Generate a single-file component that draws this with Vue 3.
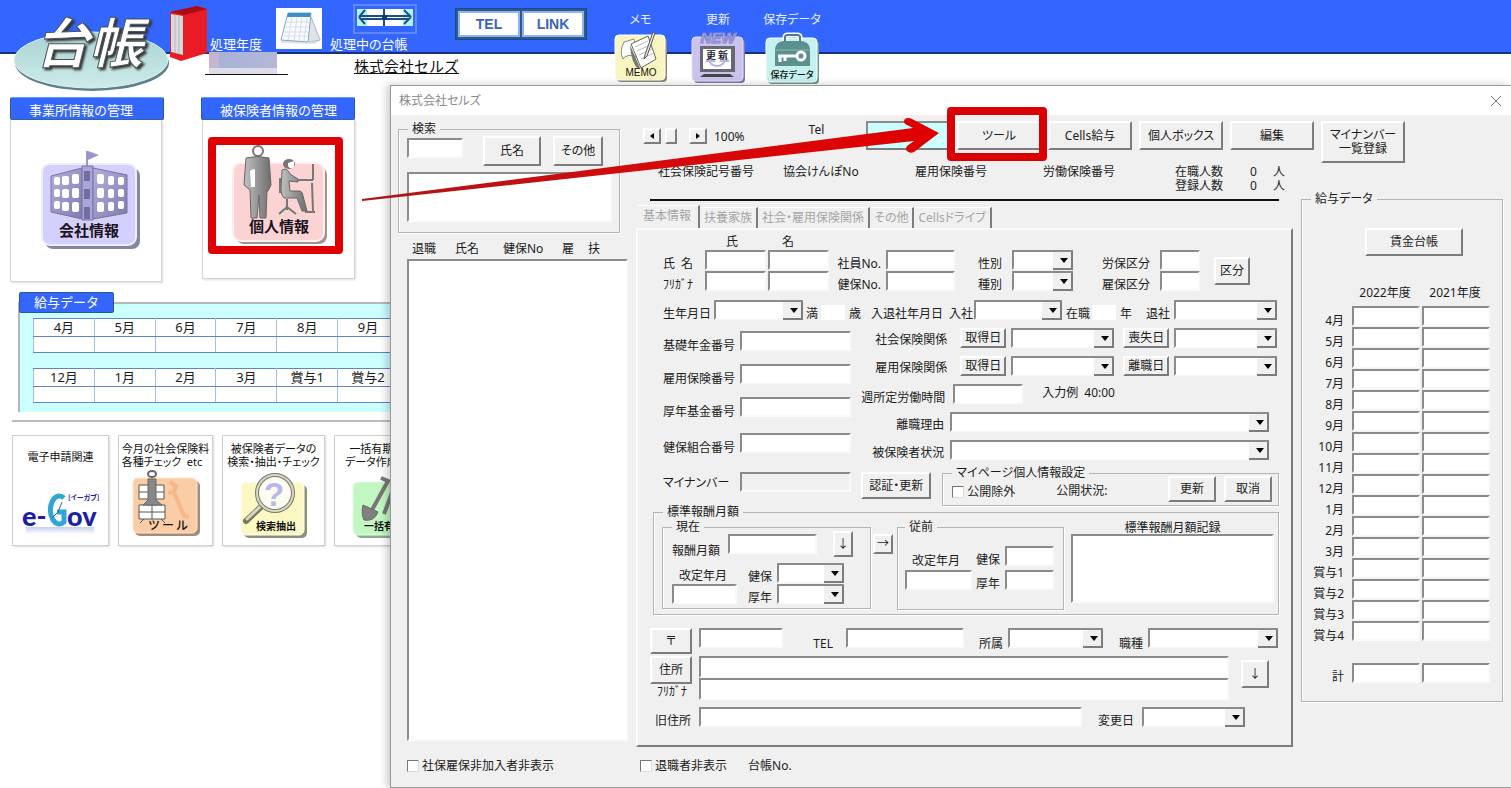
<script setup>
const monthRows = [
  ['4月', '5月', '6月', '7月', '8月', '9月'],
  ['12月', '1月', '2月', '3月', '賞与1', '賞与2'],
]
const payRows = [
  '4月', '5月', '6月', '7月', '8月', '9月', '10月', '11月', '12月',
  '1月', '2月', '3月', '賞与1', '賞与2', '賞与3', '賞与4',
]
const tabs = ['基本情報', '扶養家族', '社会・雇用保険関係', 'その他', 'Cellsドライブ']
const numberFields = [
  { id: 'kiso', label: '基礎年金番号' },
  { id: 'koyo', label: '雇用保険番号' },
  { id: 'kosei', label: '厚年基金番号' },
  { id: 'kenpo', label: '健保組合番号' },
  { id: 'mynum', label: 'マイナンバー', locked: true },
]
const insuranceRows = [
  { id: 'shaho', label: '社会保険関係', start: '取得日', end: '喪失日' },
  { id: 'koho', label: '雇用保険関係', start: '取得日', end: '離職日' },
]
const windowRows = [0, 1, 2]
</script>

<template>
  <div class="page">
    <header class="top">
      <svg class="logo" viewBox="0 -7 160 93" role="img" aria-label="台帳">
        <defs>
          <linearGradient id="oval" x1="0" y1="0" x2="0" y2="1">
            <stop offset="0" stop-color="#a9d3d3" />
            <stop offset="1" stop-color="#cdebe9" />
          </linearGradient>
        </defs>
        <ellipse cx="82" cy="56" rx="77" ry="28" fill="#5d7f8c" />
        <ellipse cx="81" cy="53" rx="77" ry="28" fill="url(#oval)" stroke="#dff3f3" stroke-width="1" />
        <text x="25" y="56" class="logo-text">台帳</text>
      </svg>
      <svg class="book" viewBox="0 0 38 58" aria-hidden="true">
        <path d="M0 6 L27 0 L37 3 L37 47 L11 55 L0 51 Z" fill="#e81c24" />
        <path d="M0 6 L27 0 L37 3 L14 9 Z" fill="#a80d16" />
        <path d="M1 8 L13 10 L13 49 L1 46 Z" fill="#dadada" />
        <path d="M5 9 L5 47 M9 10 L9 48" stroke="#b5b5c0" stroke-width="1" />
      </svg>
      <div class="year">
        <span class="bar-label">処理年度</span>
        <div class="year-value"><span class="mask"></span></div>
      </div>
      <svg class="calendar" viewBox="0 0 46 41" aria-hidden="true">
        <rect width="46" height="41" fill="#fff" />
        <path d="M12 5 L34 5 L45 32 L39 36 L5 35 Z" fill="#dde3e8" />
        <path d="M12 5 L35 5 L32 34 L5 32 Z" fill="#fbfcff" stroke="#7fa6d4" />
        <path d="M12 5 L35 5 L34 9 L11 9 Z" fill="#3b90c8" />
        <path d="M10 14 H33 M9 19 H33 M8 24 H32 M8 28 H32 M16 10 L12 32 M21 10 L18 32 M26 10 L23 33 M31 10 L28 33" stroke="#d5dcea" fill="none" />
        <path d="M35 9 L44 32 L33 34" fill="none" stroke="#b5bdc8" />
      </svg>
      <div class="ledger">
        <svg class="arrows" viewBox="0 0 64 30" aria-hidden="true">
          <rect x="1" y="1" width="62" height="28" fill="none" stroke="#5f88f6" stroke-width="2" />
          <rect x="4" y="5" width="56" height="17" fill="#fff" />
          <rect x="4" y="5" width="10" height="17" fill="#aef4fa" />
          <rect x="50" y="5" width="10" height="17" fill="#aef4fa" />
          <path d="M6 13 L12 6 M6 13 L12 20 M7 12 H57 M7 15 H57 M58 13 L51 6 M58 13 L51 20 M31 5 V22" stroke="#1c4f88" stroke-width="2" fill="none" />
          <rect x="29" y="11" width="5" height="5" fill="#123a72" />
        </svg>
        <span class="bar-label">処理中の台帳</span>
        <a class="company" href="#">株式会社セルズ</a>
      </div>
      <div class="links">
        <button type="button">TEL</button>
        <button type="button">LINK</button>
      </div>
      <button type="button" class="tool memo">
        <span>メモ</span>
        <svg width="54" height="53" viewBox="0 0 54 53" aria-hidden="true">
          <rect x="3" y="7" width="50" height="44" rx="4" fill="#8c8c70" />
          <rect x="1" y="4" width="50" height="45" rx="4" fill="#f9f5c0" stroke="#fff" />
          <path d="M9 28 Q5 21 10 11 L20 8 L24 26 Q12 22 9 28 Z" fill="#fff" stroke="#888" />
          <path d="M17 13 L34 5 L42 28 L27 37 Z" fill="#fff" stroke="#666" />
          <path d="M16 14 L26 37 L24 38 Q17 31 16 14" fill="#777" />
          <path d="M21 16 L34 10 M23 20 L36 14 M25 24 L38 18 M27 28 L40 22" stroke="#bbb" />
          <path d="M39 1 L31 24 L30 28 L33 25 L41 2 Z" fill="#eee" stroke="#555" />
          <text x="27" y="45" class="tiny latin">MEMO</text>
        </svg>
      </button>
      <button type="button" class="tool update">
        <span>更新</span>
        <svg width="54" height="53" viewBox="0 0 54 53" aria-hidden="true">
          <rect x="3" y="9" width="51" height="43" rx="4" fill="#807aa8" />
          <rect x="1" y="6" width="51" height="44" rx="4" fill="#c9c3ee" stroke="#e4e0ff" />
          <text x="27" y="12" class="new">NEW</text>
          <rect x="9" y="15" width="35" height="26" fill="#666a70" />
          <rect x="12" y="18" width="28" height="20" fill="#fff" />
          <path d="M18 28 a8 7 0 0 0 16 0 M16 30 l3 -5 l4 5 z M30 30 l4 -5 l3 5 z" fill="none" stroke="#b8b4e4" stroke-width="2" />
          <text x="26" y="28" class="tiny">更 新</text>
          <path d="M9 46 L13 43 H39 L43 46 Z" fill="#444" />
        </svg>
      </button>
      <button type="button" class="tool save">
        <span>保存データ</span>
        <svg width="54" height="53" viewBox="0 0 54 53" aria-hidden="true">
          <rect x="3" y="8" width="51" height="43" rx="4" fill="#6d9a9a" />
          <rect x="1" y="5" width="51" height="44" rx="4" fill="#c6f1ee" stroke="#fff" />
          <path d="M20 9 V4 Q20 2 23 2 H32 Q35 2 35 4 V9" fill="none" stroke="#fff" stroke-width="5" />
          <path d="M20 9 V4 Q20 2 23 2 H32 Q35 2 35 4 V9" fill="none" stroke="#4d7f7f" stroke-width="2" />
          <path d="M10 16 Q11 9 18 8 H37 Q44 9 45 16 V33 H10 Z" fill="#5a908d" />
          <path d="M10 17 H45" stroke="#8fb9b5" />
          <path d="M13 23 H31" stroke="#fff" stroke-width="3" />
          <path d="M15 23 V29 M20 23 V28" stroke="#fff" stroke-width="3" />
          <circle cx="36" cy="23" r="4" fill="#5a908d" stroke="#fff" stroke-width="3" />
          <text x="27" y="45" class="tiny small">保存データ</text>
        </svg>
      </button>
    </header>

    <main class="desk">
      <div class="cards">
        <section class="card office">
          <h2>事業所情報の管理</h2>
          <div class="card-body">
            <button type="button" class="plain">
              <svg width="102" height="104" viewBox="0 0 102 104" aria-label="会社情報">
                <defs>
                  <linearGradient id="bld" x1="0" y1="0" x2="1" y2="1">
                    <stop offset="0" stop-color="#b4b0dc" />
                    <stop offset="1" stop-color="#7f7bb0" />
                  </linearGradient>
                </defs>
                <rect x="5" y="18" width="95" height="81" rx="8" fill="#8587a0" />
                <rect x="2" y="14" width="94" height="81" rx="8" fill="#d3d0fb" stroke="#ededff" stroke-width="2" />
                <path d="M47 1 V18" stroke="#9a94cc" stroke-width="2" />
                <path d="M48 1 L59 5 L48 10 Z" fill="#9a94cc" />
                <path d="M11 26 L42 18 L42 69 L11 62 Z" fill="url(#bld)" stroke="#7773a8" />
                <path d="M42 16 H53 V70 H42 Z" fill="#aaa6d5" stroke="#7773a8" />
                <path d="M53 18 L87 25 V63 L53 69 Z" fill="url(#bld)" stroke="#7773a8" />
                <g fill="#fff">
                  <template v-for="r in windowRows" :key="r">
                    <rect x="14" :y="27 + r * 12" width="6" height="8" rx="2" />
                    <rect x="22" :y="26 + r * 13" width="7" height="9" rx="2" />
                    <rect x="32" :y="24 + r * 14" width="7" height="10" rx="2" />
                    <rect x="57" :y="24 + r * 14" width="7" height="10" rx="2" />
                    <rect x="68" :y="26 + r * 13" width="6" height="9" rx="2" />
                    <rect x="78" :y="27 + r * 12" width="6" height="8" rx="2" />
                  </template>
                </g>
                <path d="M44 21 H50 V31 H44 Z M44 39 H50 V49 H44 Z M44 57 H50 V69 H44 Z" fill="#716da5" />
                <text x="49" y="86" class="tile-name">会社情報</text>
              </svg>
            </button>
          </div>
        </section>
        <section class="card insured">
          <h2>被保険者情報の管理</h2>
          <div class="card-body">
            <button type="button" class="plain marked">
              <svg width="119" height="101" viewBox="0 0 119 101" aria-label="個人情報">
                <defs>
                  <linearGradient id="man" x1="0" y1="0" x2="1" y2="0">
                    <stop offset="0" stop-color="#c0c0c0" />
                    <stop offset="1" stop-color="#6e6e6e" />
                  </linearGradient>
                </defs>
                <rect x="20" y="22" width="91" height="77" rx="8" fill="#a89090" />
                <rect x="17" y="18" width="91" height="78" rx="8" fill="#fcd3d3" stroke="#fff0f0" stroke-width="2" />
                <circle cx="42" cy="6" r="5" fill="#fff" stroke="#777" stroke-width="2" />
                <path d="M30 13 Q42 10 53 13 L55 40 L52 46 L51 46 L50 73 H44 L43 50 L41 73 H35 L34 45 L28 40 Z" fill="url(#man)" stroke="#666" />
                <path d="M34 26 Q39 22 39 26 V42 H35 Z" fill="#fff" />
                <ellipse cx="73" cy="19" rx="6" ry="5" fill="#777" />
                <path d="M72 18 l6 -2 v6 q-4 3 -6 -1 Z" fill="#fff" />
                <path d="M66 25 Q71 22 74 29 L82 34 L82 37 L73 36 L74 46 H84 Q87 47 87 51 L91 66 H86 L81 53 L68 53 Q65 50 65 45 Z" fill="url(#man)" stroke="#666" />
                <path d="M82 35 H97 M97 19 V35 M96 38 L97 66 M89 67 H99 M71 54 V65 M63 69 L71 62 L80 69 M64 48 V33" stroke="#777" stroke-width="2" fill="none" />
                <text x="63" y="87" class="tile-name">個人情報</text>
              </svg>
            </button>
          </div>
        </section>
      </div>

      <section class="pay">
        <h2>給与データ</h2>
        <table v-for="(row, i) in monthRows" :key="i">
          <thead>
            <tr><th v-for="m in row" :key="m" scope="col">{{ m }}</th></tr>
          </thead>
          <tbody>
            <tr><td v-for="m in row" :key="m"></td></tr>
          </tbody>
        </table>
      </section>

      <div class="services">
        <a class="svc egov" href="#">
          <span>電子申請関連</span>
          <svg width="78" height="50" viewBox="0 0 78 50" aria-hidden="true">
            <defs>
              <linearGradient id="sheen" x1="0" y1="0" x2="0" y2="1">
                <stop offset="0" stop-color="#c4cfee" />
                <stop offset="1" stop-color="#fff" />
              </linearGradient>
            </defs>
            <rect x="4" y="39" width="68" height="7" fill="url(#sheen)" />
            <text x="0" y="38" class="gov">e-</text>
            <text x="45" y="38" class="gov">ov</text>
            <path d="M42 10 A9 14 0 1 0 42 34 V24 H35" fill="none" stroke="#2fa5d8" stroke-width="5" />
            <path d="M30 30 L36 24 L40 14" fill="none" stroke="#1b6ea8" stroke-width="1" />
            <text x="46" y="12" class="gov-kana">[イーガブ]</text>
          </svg>
        </a>
        <a class="svc check-svc" href="#">
          <span>今月の社会保険料<br />各種チェック&ensp;etc</span>
          <svg width="72" height="68" viewBox="0 0 72 68" aria-hidden="true">
            <rect x="5" y="11" width="65" height="55" rx="5" fill="#a38c78" />
            <rect x="3" y="8" width="64" height="55" rx="5" fill="#fbcda6" stroke="#ffe6d0" />
            <path d="M40 12 l6 4 l-2 6 l-6 1 M44 22 L54 46 l5 1" stroke="#f6b88a" stroke-width="4" fill="none" />
            <ellipse cx="22" cy="4" rx="4" ry="3" fill="#fff" stroke="#666" stroke-width="2" />
            <path d="M9 15 H34 V29 H9 Z M9 35 H35 V49 H9 Z" fill="#fff" stroke="#555" />
            <path d="M9 22 H34 M9 42 H35 M22 35 V49 M10 53 L14 49 M35 53 L31 49" stroke="#555" fill="none" />
            <path d="M18 9 H26 V30 L32 35 H13 L18 30 Z" fill="#888" stroke="#666" />
            <text x="38" y="60" class="tiny wide">ツ ー ル</text>
          </svg>
        </a>
        <a class="svc search" href="#">
          <span>被保険者データの<br />検索・抽出・チェック</span>
          <svg width="68" height="64" viewBox="0 0 68 64" aria-hidden="true">
            <rect x="4" y="11" width="63" height="53" rx="5" fill="#8f8f78" />
            <rect x="1" y="8" width="63" height="53" rx="5" fill="#fbf8c4" stroke="#fff" />
            <path d="M22 32 L6 47" stroke="#77775f" stroke-width="6" stroke-linecap="round" />
            <path d="M21 32 L7 45" stroke="#d6d6c0" stroke-width="3" stroke-linecap="round" />
            <circle cx="35" cy="19" r="18" fill="#fdfcf0" stroke="#77776a" stroke-width="4" />
            <circle cx="35" cy="19" r="18" fill="none" stroke="#d9d9c6" stroke-width="2" />
            <text x="34" y="32" class="question">?</text>
            <text x="36" y="56" class="tiny strong">検索抽出</text>
          </svg>
        </a>
        <a class="svc batch" href="#">
          <span>一括有期<br />データ作成</span>
          <svg width="68" height="62" viewBox="0 0 68 62" aria-hidden="true">
            <rect x="4" y="9" width="64" height="53" rx="5" fill="#8fa890" />
            <rect x="1" y="6" width="64" height="53" rx="5" fill="#c2f7c2" stroke="#e8ffe8" />
            <path d="M29 2 L36 5 L20 34 M44 6 L32 38" stroke="#777" stroke-width="4" fill="none" />
            <path d="M11 29 L26 36 Q22 46 12 44 Q9 38 11 29 Z" fill="#808080" stroke="#666" />
            <text x="32" y="54" class="tiny strong">一括有期</text>
          </svg>
        </a>
      </div>
    </main>

    <div class="dialog" role="dialog" aria-label="株式会社セルズ">
      <div class="titlebar">
        <span>株式会社セルズ</span>
        <button type="button" aria-label="閉じる">
          <svg width="12" height="12" viewBox="0 0 12 12"><path d="M1 1 L11 11 M11 1 L1 11" stroke="#777" fill="none" /></svg>
        </button>
      </div>

      <div class="body">
        <aside class="finder">
          <fieldset class="search-box">
            <legend>検索</legend>
            <div class="search-row">
              <input type="text" class="field" aria-label="検索" />
              <button type="button" class="btn name-btn">氏名</button>
              <button type="button" class="btn other-btn">その他</button>
            </div>
            <div class="listbox result" role="listbox" aria-label="検索結果"></div>
          </fieldset>
          <div class="list-head">
            <span>退職</span><span>氏名</span><span>健保No</span><span>雇</span><span>扶</span>
          </div>
          <div class="listbox people" role="listbox" aria-label="被保険者"></div>
          <label class="check"><input type="checkbox" /><span>社保雇保非加入者非表示</span></label>
        </aside>

        <div class="work">
          <div class="toolbar">
            <div class="zoomer">
              <button type="button" class="btn step" aria-label="縮小"><svg width="4" height="6" viewBox="0 0 4 6"><path d="M4 0 V6 L0 3 Z" /></svg></button>
              <span class="thumb"></span>
              <button type="button" class="btn step" aria-label="拡大"><svg width="4" height="6" viewBox="0 0 4 6"><path d="M0 0 V6 L4 3 Z" /></svg></button>
              <span class="pct">100%</span>
              <span class="tel">Tel</span>
            </div>
            <button type="button" class="btn cyan" aria-label="表示"></button>
            <span class="focus"><button type="button" class="btn">ツール</button></span>
            <button type="button" class="btn">Cells給与</button>
            <button type="button" class="btn">個人ボックス</button>
            <button type="button" class="btn">編集</button>
            <button type="button" class="btn tall">マイナンバー<br />一覧登録</button>
          </div>

          <div class="columns">
            <div class="center">
              <div class="info">
                <span>社会保険記号番号</span><span>協会けんぽNo</span><span>雇用保険番号</span><span>労働保険番号</span>
                <span>在職人数</span><span>0</span><span>人</span>
                <span class="second">登録人数</span><span>0</span><span>人</span>
              </div>
              <hr />
              <div class="tabs" role="tablist">
                <button v-for="t in tabs" :key="t" type="button" role="tab">{{ t }}</button>
              </div>
              <form class="panel" @submit.prevent>
                <div class="names">
                  <span class="col-head sei">氏</span><span class="col-head mei">名</span>
                  <label for="sei" class="lab first">氏&ensp;名</label>
                  <input id="sei" class="field" /><input class="field" aria-label="名" />
                  <label for="empno" class="lab no">社員No.</label><input id="empno" class="field" />
                  <label for="sex" class="lab">性別</label><span class="combo"><select id="sex"></select></span>
                  <label for="roho" class="lab">労保区分</label><input id="roho" class="field" />
                  <button type="button" class="btn kubun">区分</button>
                  <label for="kana" class="lab first">ﾌﾘｶﾞﾅ</label>
                  <input id="kana" class="field" /><input class="field" aria-label="名 ﾌﾘｶﾞﾅ" />
                  <label for="kenno" class="lab no">健保No.</label><input id="kenno" class="field" />
                  <label for="kind" class="lab">種別</label><span class="combo"><select id="kind"></select></span>
                  <label for="koho-k" class="lab">雇保区分</label><input id="koho-k" class="field" />
                </div>

                <div class="dates">
                  <label for="birth">生年月日</label><span class="combo"><select id="birth"></select></span>
                  <label for="age" class="mid">満</label><input id="age" class="blank" /><span class="after">歳</span>
                  <span>入退社年月日</span>
                  <label for="join">入社</label><span class="combo"><select id="join"></select></span>
                  <label for="tenure" class="after">在職</label><input id="tenure" class="blank" /><span class="after">年</span>
                  <label for="leave">退社</label><span class="combo"><select id="leave"></select></span>
                </div>

                <div class="split">
                  <div class="numbers">
                    <template v-for="f in numberFields" :key="f.id">
                      <label :for="f.id">{{ f.label }}</label>
                      <input :id="f.id" class="field" :class="{ locked: f.locked }" :disabled="f.locked" />
                    </template>
                  </div>
                  <div class="details">
                    <div v-for="r in insuranceRows" :key="r.id" class="ins">
                      <label :for="r.id" class="lab">{{ r.label }}</label>
                      <button type="button" class="btn">{{ r.start }}</button>
                      <span class="combo"><select :id="r.id"></select></span>
                      <button type="button" class="btn end">{{ r.end }}</button>
                      <span class="combo"><select :aria-label="r.end"></select></span>
                    </div>
                    <div class="hours">
                      <label for="hours" class="lab">週所定労働時間</label>
                      <input id="hours" class="field" />
                      <span class="example">入力例&ensp;40:00</span>
                    </div>
                    <div class="reason">
                      <label for="reason" class="lab">離職理由</label><span class="combo"><select id="reason"></select></span>
                    </div>
                    <div class="reason">
                      <label for="status" class="lab">被保険者状況</label><span class="combo"><select id="status"></select></span>
                    </div>
                    <div class="auth">
                      <button type="button" class="btn auth-btn">認証・更新</button>
                      <fieldset>
                        <legend>マイページ個人情報設定</legend>
                        <div class="mypage">
                          <label class="check"><input type="checkbox" /><span>公開除外</span></label>
                          <span class="state">公開状況:</span>
                          <button type="button" class="btn">更新</button>
                          <button type="button" class="btn">取消</button>
                        </div>
                      </fieldset>
                    </div>
                  </div>
                </div>

                <fieldset class="salary">
                  <legend>標準報酬月額</legend>
                  <div class="salary-row">
                    <fieldset class="now">
                      <legend>現在</legend>
                      <div class="pay-line">
                        <label for="hoshu" class="lab">報酬月額</label>
                        <input id="hoshu" class="field" />
                        <button type="button" class="btn down">↓</button>
                      </div>
                      <div class="rev">
                        <label for="rev-now" class="rev-name">改定年月</label>
                        <label for="kn" class="lab">健保</label><span class="combo"><select id="kn"></select></span>
                        <input id="rev-now" class="field" />
                        <label for="kon" class="lab">厚年</label><span class="combo"><select id="kon"></select></span>
                      </div>
                    </fieldset>
                    <button type="button" class="btn move">→</button>
                    <fieldset class="before">
                      <legend>従前</legend>
                      <div class="rev">
                        <label for="rev-b" class="rev-name">改定年月</label>
                        <label for="kb" class="lab">健保</label><input id="kb" class="field" />
                        <input id="rev-b" class="field" />
                        <label for="kob" class="lab">厚年</label><input id="kob" class="field" />
                      </div>
                    </fieldset>
                    <div class="record">
                      <label for="record">標準報酬月額記録</label>
                      <textarea id="record" class="field"></textarea>
                    </div>
                  </div>
                </fieldset>

                <div class="contact">
                  <button type="button" class="btn">〒</button>
                  <input class="field zip" aria-label="郵便番号" />
                  <label for="tel" class="lab telno">TEL</label><input id="tel" class="field" />
                  <label for="dept" class="lab">所属</label><span class="combo"><select id="dept"></select></span>
                  <label for="job" class="lab">職種</label><span class="combo"><select id="job"></select></span>
                </div>
                <div class="address">
                  <div class="address-keys">
                    <button type="button" class="btn">住所</button>
                    <label for="addr-kana">ﾌﾘｶﾞﾅ</label>
                  </div>
                  <div class="address-lines">
                    <input class="field" aria-label="住所" />
                    <input id="addr-kana" class="field" />
                  </div>
                  <button type="button" class="btn down">↓</button>
                </div>
                <div class="old">
                  <label for="old" class="lab">旧住所</label><input id="old" class="field" />
                  <label for="changed" class="lab">変更日</label><span class="combo"><select id="changed"></select></span>
                </div>
              </form>
              <div class="foot">
                <label class="check"><input type="checkbox" /><span>退職者非表示</span></label>
                <span>台帳No.</span>
              </div>
            </div>

            <fieldset class="payroll">
              <legend>給与データ</legend>
              <button type="button" class="btn">賃金台帳</button>
              <table>
                <thead>
                  <tr><td></td><th scope="col">2022年度</th><th scope="col">2021年度</th></tr>
                </thead>
                <tbody>
                  <tr v-for="r in payRows" :key="r">
                    <th scope="row">{{ r }}</th>
                    <td><input class="field" :aria-label="r + ' 2022年度'" /></td>
                    <td><input class="field" :aria-label="r + ' 2021年度'" /></td>
                  </tr>
                </tbody>
                <tfoot>
                  <tr>
                    <th scope="row">計</th>
                    <td><input class="field" aria-label="計 2022年度" /></td>
                    <td><input class="field" aria-label="計 2021年度" /></td>
                  </tr>
                </tfoot>
              </table>
            </fieldset>
          </div>
        </div>
      </div>
    </div>

    <svg class="pointer" width="580" height="84" viewBox="0 0 580 84" aria-hidden="true">
      <defs>
        <linearGradient id="shaft" x1="0" y1="0" x2="1" y2="0">
          <stop offset="0" stop-color="#a8181c" />
          <stop offset="0.5" stop-color="#d40a0a" />
          <stop offset="1" stop-color="#e00000" />
        </linearGradient>
      </defs>
      <path d="M0 81 L551 10 L543 6 Q541 3 543 1 Q546 -1 550 1 L577 15 L552 34 Q548 36 545 33 Q543 31 545 28 L552 23 L0 83 Z" fill="url(#shaft)" />
    </svg>
  </div>
</template>

<style>
html,
body {
  margin: 0;
  background: #fff;
}
</style>

<style scoped>
* {
  box-sizing: border-box;
}
.page {
  position: relative;
  min-height: 100vh;
  overflow: hidden;
  font: 12px/14px "Noto Sans", "Noto Sans CJK JP", sans-serif;
  font-feature-settings: "palt";
  color: #1c1c1c;
}
button,
input,
select,
textarea {
  font: inherit;
  font-feature-settings: inherit;
  color: inherit;
  margin: 0;
  padding: 0;
  border-radius: 0;
  min-width: 0;
}
h2 {
  margin: 0;
  font-weight: 400;
}
span,
label,
a,
button,
legend {
  white-space: nowrap;
}

/* ---------- top bar ---------- */
.top {
  display: flex;
  align-items: flex-start;
  height: 97px;
  padding-left: 10px;
  background: linear-gradient(#3366ff 0, #3366ff 52px, #16307c 52px, #16307c 54px, #fff 54px);
}
.top > * {
  flex: none;
}
.logo {
  width: 160px;
  height: 93px;
}
.logo-text {
  font: italic bold 54px "Noto Sans CJK JP", sans-serif;
  fill: #fff;
  stroke: #4a5358;
  stroke-width: 1px;
  filter: drop-shadow(2px 2px 1px #333);
}
.book {
  width: 38px;
  height: 58px;
  margin: 6px -3px 0 0;
}
.bar-label {
  display: block;
  color: #fff;
  font-size: 13px;
  line-height: 16px;
}
.year {
  width: 71px;
  padding-top: 36px;
}
.year .bar-label {
  padding-left: 5px;
}
.year-value {
  width: 83px;
  padding-left: 4px;
  border-bottom: 1px solid #111;
}
.mask {
  display: block;
  width: 68px;
  height: 22px;
  background: linear-gradient(90deg, #c5b4d0 0, #c5b4d0 10px, #a9b1d6 10px, #b3b8d8 100%);
  border-bottom: 6px solid #dcdde6;
}
.calendar {
  width: 46px;
  height: 41px;
  margin: 8px 8px 0 0;
}
.ledger {
  width: 125px;
  padding-top: 4px;
}
.arrows {
  display: block;
  width: 64px;
  height: 30px;
  margin: 0 0 2px 23px;
}
.company {
  display: inline-block;
  margin: 6px 0 0 24px;
  font-size: 15px;
  line-height: 17px;
  font-feature-settings: normal;
  color: #111;
  text-decoration: underline;
}
.links {
  display: flex;
  gap: 2px;
  margin: 8px 27px 0 0;
  padding: 2px;
  background: #2b5a8f;
  border: 1px solid #1e4b86;
}
.links button {
  width: 62px;
  height: 26px;
  border: 2px solid #8fb3ea;
  outline: 1px solid #2b5a8f;
  background: #fff;
  color: #3a63b8;
  font: bold 14px "Liberation Sans", Arial, sans-serif;
}
.tool {
  display: flex;
  flex-direction: column;
  align-items: center;
  border: 0;
  background: none;
  padding-top: 13px;
  color: #e9eeff;
}
.tool svg {
  overflow: visible;
}
.memo {
  width: 53px;
  margin-right: 24px;
}
.memo svg,
.update svg {
  margin-top: 4px;
}
.update {
  width: 54px;
  margin-right: 17px;
}
.save {
  width: 60px;
}
.save svg {
  margin-top: 6px;
}
svg text {
  font-family: "Noto Sans CJK JP", sans-serif;
}
.tiny {
  font-size: 10px;
  font-weight: 500;
  text-anchor: middle;
  fill: #111;
}
.tiny.latin {
  font-family: "Liberation Sans", Arial, sans-serif;
}
.tiny.small {
  font-size: 9px;
}
.tiny.strong {
  font-weight: 700;
}
.tiny.wide {
  font-size: 12px;
}
.new {
  font: italic bold 15px "Liberation Sans", Arial, sans-serif !important;
  text-anchor: middle;
  fill: #b3b0ea;
  stroke: #8583cc;
}

/* ---------- launcher page ---------- */
.desk {
  width: 430px;
}
.cards {
  display: flex;
  gap: 37px;
  padding-left: 10px;
}
.card {
  width: 154px;
  height: 185px;
  display: flex;
  flex-direction: column;
}
.card h2 {
  height: 23px;
  padding-left: 18px;
  border: 1px solid #2a5a8a;
  border-top-color: #5e9be0;
  border-radius: 2px;
  background: #3366ff;
  color: #fff;
  font-size: 13px;
  line-height: 24px;
  font-feature-settings: normal;
}
.card-body {
  flex: 1;
  display: flex;
  align-items: flex-start;
  margin-right: 2px;
  padding: 30px 0 0 29px;
  border: 1px solid #d4d4d4;
  border-top: 0;
  box-shadow: 1px 1px 2px #ddd;
}
.insured .card-body {
  margin: 0 0 3px 1px;
  padding: 17px 0 0 5px;
}
.plain {
  display: block;
  border: 0;
  background: none;
}
.plain svg {
  display: block;
}
.marked {
  border: 8px solid #df0004;
  border-radius: 4px;
}
.tile-name {
  font-size: 15px;
  font-weight: 700;
  text-anchor: middle;
  fill: #1a1220;
}
.pay {
  margin: 20px 0 0 18px;
  padding: 0 0 9px 13px;
  background: #ccffff;
  border: 2px solid #b4b8ba;
  border-width: 2px 0 0 2px;
}
.pay h2 {
  width: 95px;
  height: 21px;
  margin: -12px 0 5px -14px;
  background: #3366ff;
  border: 1px solid #2a5a8a;
  border-radius: 2px;
  color: #fff;
  font-size: 13px;
  line-height: 18px;
  text-align: center;
  font-feature-settings: normal;
}
.pay table {
  border-collapse: collapse;
  background: #fff;
  table-layout: fixed;
  width: 366px;
  margin-bottom: 15px;
}
.pay table:last-child {
  margin-bottom: 0;
}
.pay th,
.pay td {
  border: 1px solid #5f86c4;
  border-left-color: #a9bce0;
  border-right-color: #a9bce0;
  padding: 0;
  font-weight: 400;
  font-size: 13px;
  line-height: 17px;
}
.pay td {
  height: 16px;
}
.services {
  display: flex;
  align-items: flex-start;
  gap: 9px;
  margin: 8px 0 0 12px;
  padding-top: 13px;
  border-top: 2px solid #bdbdbd;
}
.svc {
  flex: none;
  display: flex;
  flex-direction: column;
  justify-content: space-between;
  align-items: center;
  height: 111px;
  width: 97px;
  padding: 6px 0 7px;
  border: 1px solid #cfcfcf;
  box-shadow: 1px 1px 2px #d8d8d8;
  color: #111;
  font-size: 11px;
  line-height: 13px;
  text-decoration: none;
  text-align: center;
}
.svc svg {
  overflow: visible;
}
.egov {
  padding-top: 14px;
}
.check-svc {
  text-align: left;
  width: 95px;
}
.search {
  width: 103px;
}
.batch {
  align-items: flex-start;
  padding-left: 10px;
}
.batch svg {
  margin-left: 7px;
}
.gov {
  font: 900 27px "Lato", "Open Sans", sans-serif !important;
  fill: #1c1fa0;
}
.gov-kana {
  font-size: 7px;
  font-weight: 700;
  fill: #1c1fa0;
}
.question {
  font: bold 33px "Liberation Sans", Arial, sans-serif !important;
  text-anchor: middle;
  fill: #b9b7ee;
}

/* ---------- dialog ---------- */
.dialog {
  position: absolute;
  left: 390px;
  right: 0;
  top: 85px;
  bottom: 0;
  background: #f0f0f0;
  border: 1px solid #9a9a9a;
  border-right: 0;
  box-shadow: -3px 0 8px rgba(0, 0, 0, 0.22);
}
.titlebar {
  display: flex;
  justify-content: space-between;
  align-items: center;
  height: 29px;
  padding: 0 9px 0 8px;
  background: #fff;
  color: #8a8a8a;
}
.titlebar button {
  display: flex;
  border: 0;
  background: none;
}
.body {
  display: grid;
  grid-template-columns: 230px 1fr;
  gap: 8px;
  padding-left: 7px;
}
fieldset {
  margin: 0;
  padding: 0;
  min-width: 0;
  border: 1px solid #b4b4b4;
  box-shadow: 1px 1px 0 #fff, inset 1px 0 0 #fff;
}
legend {
  margin-left: 9px;
  padding: 0 4px;
  line-height: 12px;
}
.btn {
  height: 28px;
  background: #f0f0f0;
  border: 2px solid;
  border-color: #fff #7c7c7c #7c7c7c #fff;
  text-align: center;
}
.field {
  width: 100%;
  height: 20px;
  background: #fff;
  border: 2px solid;
  border-color: #8b8b8b #fafafa #fafafa #8b8b8b;
  outline: 0;
}
.locked {
  background: #f0f0f0;
}
.blank {
  width: 100%;
  height: 15px;
  border: 0;
  background: #fff;
}
.combo {
  position: relative;
  display: block;
  height: 20px;
  background: #fff;
  border: 2px solid;
  border-color: #8b8b8b #8b8b8b #fafafa #8b8b8b;
}
.combo select {
  display: block;
  width: 100%;
  height: 100%;
  border: 0;
  background: none;
  appearance: none;
}
.combo::before {
  content: "";
  position: absolute;
  top: 0;
  bottom: -2px;
  right: -2px;
  width: 18px;
  background: #f0f0f0;
  border-right: 2px solid #7c7c7c;
  border-bottom: 2px solid #7c7c7c;
  pointer-events: none;
}
.combo::after {
  content: "";
  position: absolute;
  top: 50%;
  right: 3px;
  margin-top: -2px;
  border: 4px solid transparent;
  border-top: 5px solid #000;
  border-bottom: 0;
  pointer-events: none;
}
.lab {
  align-self: end;
  text-align: right;
  line-height: 12px;
  padding-right: 10px;
}
.check {
  display: flex;
  align-items: center;
  gap: 3px;
}
.check input {
  appearance: none;
  width: 12px;
  height: 12px;
  background: #fff;
  border: 1px solid;
  border-color: #777 #ddd #ddd #777;
}

/* search column */
.search-box {
  width: 222px;
  height: 110px;
  margin-top: 8px;
  padding: 0 7px 0 8px;
}
.search-box legend {
  margin-left: 1px;
}
.search-row {
  display: flex;
  align-items: flex-start;
  padding-top: 1px;
}
.search-row .field {
  width: 56px;
  margin: 2px 20px 0 0;
}
.name-btn {
  width: 58px;
  height: 30px;
  margin-right: 12px;
}
.other-btn {
  width: 50px;
  height: 30px;
}
.listbox {
  background: #fff;
  border: 2px solid;
  border-color: #8b8b8b #fafafa #fafafa #8b8b8b;
}
.result {
  height: 50px;
  margin-top: 6px;
}
.list-head {
  display: grid;
  grid-template-columns: 43px 48px 59px 26px 1fr;
  padding: 9px 0 3px 14px;
}
.people {
  height: 482px;
  margin-left: 9px;
}
.finder > .check {
  margin: 18px 0 0 9px;
}

/* toolbar */
.toolbar {
  display: flex;
  align-items: flex-start;
  gap: 7px;
  height: 48px;
  padding: 6px 106px 0 7px;
}
.toolbar > .btn,
.focus .btn {
  flex: none;
  width: 84px;
  height: 29px;
}
.toolbar > .tall {
  height: 42px;
}
.toolbar > .cyan {
  background: #ccffff;
  border-color: #8b8b8b #7c7c7c #7c7c7c #8b8b8b;
}
.focus {
  position: relative;
}
.focus::after {
  content: "";
  position: absolute;
  inset: -14px -6px -11px -10px;
  border: 8px solid #d90006;
  border-radius: 4px;
  pointer-events: none;
}
.zoomer {
  flex: 1;
  display: flex;
  align-items: flex-start;
}
.step {
  display: flex;
  align-items: center;
  justify-content: center;
  width: 18px;
  height: 16px;
  margin-top: 7px;
}
.thumb {
  width: 12px;
  height: 16px;
  margin: 7px 12px 0 4px;
  border: 2px solid;
  border-color: #fff #7c7c7c #7c7c7c #fff;
}
.pct {
  margin: 9px 0 0 7px;
}
.tel {
  margin: 2px 0 0 64px;
}

/* centre */
.columns {
  display: grid;
  grid-template-columns: 1fr 202px;
  gap: 8px;
  align-items: start;
  padding-right: 8px;
}
.info {
  display: grid;
  grid-template-columns: 125fr 132fr 128fr 132fr 75px 23px 20px;
  padding: 2px 0 0 22px;
}
.info .second {
  grid-column: 5;
}
hr {
  height: 2px;
  margin: 6px 14px 4px 14px;
  border: 0;
  background: #111;
}
.tabs {
  display: flex;
  align-items: flex-end;
  padding-left: 2px;
}
.tabs button {
  height: 21px;
  padding: 0 4px;
  border: 0;
  border-right: 2px solid #7c7c7c;
  border-top: 1px solid #fff;
  background: #f0f0f0;
  color: #a6a6a6;
}
.tabs button:first-child {
  height: 23px;
  padding: 0 7px 3px 5px;
}
.panel {
  border: 2px solid;
  border-color: #fafafa #7c7c7c #7c7c7c #fafafa;
  padding: 5px 12px 18px;
}
.names {
  display: grid;
  grid-template-columns: 42px 61fr 63fr 57px 69fr 57px 61fr 87px 40fr 50px;
  grid-template-rows: 14px 20px 20px;
  row-gap: 1px;
  padding: 0 29px 0 13px;
}
.names input + input {
  width: auto;
  margin-left: 2px;
}
.col-head {
  padding-left: 21px;
}
.col-head.sei {
  grid-column: 2;
}
.col-head.mei {
  padding-left: 16px;
}
.names .lab.first {
  grid-column: 1;
  text-align: left;
  padding: 0;
}
.names .lab.no {
  padding-right: 5px;
}
.kubun {
  grid-row: 2 / 4;
  grid-column: 10;
  margin-left: 14px;
  width: 36px;
  align-self: center;
}
.dates {
  display: grid;
  grid-template-columns: 51px 89fr 18px 24px 26px 78px 25px 88fr 30px 24px 30px 28px 103fr;
  align-items: end;
  padding: 0 2px 0 13px;
  margin-top: 9px;
  line-height: 12px;
}
.dates .mid {
  text-align: center;
}
.dates .after {
  padding-left: 4px;
}
.split {
  display: grid;
  grid-template-columns: 188fr 417fr;
  gap: 10px;
  padding: 8px 0 0 13px;
}
.numbers {
  display: grid;
  grid-template-columns: 77px 1fr;
  grid-template-rows: 33px 33px 36px 39px 20px;
  padding-top: 3px;
}
.numbers label {
  padding-top: 8px;
}
.numbers label:nth-last-child(2) {
  padding-top: 4px;
}
.details {
  display: flex;
  flex-direction: column;
  gap: 8px;
}
.details .btn {
  height: 20px;
}
.ins {
  display: grid;
  grid-template-columns: 94px 46px 103fr 50px 103fr;
  gap: 5px;
  padding-right: 2px;
}
.ins .end {
  margin-left: 4px;
}
.ins .lab {
  padding-right: 8px;
  line-height: 16px;
}
.reason .lab {
  line-height: 14px;
}
.hours {
  display: grid;
  grid-template-columns: 92px 70px 1fr;
}
.hours .lab {
  padding-right: 8px;
}
.example {
  padding: 2px 0 0 19px;
}
.reason {
  display: grid;
  grid-template-columns: 89px 1fr;
  padding-right: 10px;
}
.reason .lab {
  padding-right: 6px;
}
.auth {
  display: grid;
  grid-template-columns: 70px 1fr;
  gap: 11px;
  align-items: start;
}
.auth .auth-btn {
  height: 27px;
  margin-top: 4px;
}
.auth fieldset {
  margin-top: -1px;
}
.mypage {
  display: flex;
  align-items: center;
  padding: 0 6px 3px 9px;
  margin-top: -3px;
}
.mypage .btn {
  width: 48px;
  height: 26px;
  margin-left: 8px;
}
.mypage .check {
  padding-top: 6px;
}
.mypage .state {
  flex: 1;
  padding: 3px 0 0 41px;
}
.salary {
  margin: 0 0 0 3px;
  padding: 3px 4px 4px 8px;
}
.salary > legend {
  margin-left: 1px;
}
.salary-row {
  display: grid;
  grid-template-columns: 209fr 26px 167fr 210fr;
  align-items: start;
}
.now {
  padding: 0 26px 4px 9px;
}
.now legend,
.before legend {
  margin-left: 0;
}
.pay-line {
  display: flex;
  align-items: center;
  margin: -2px -9px 6px 0;
}
.pay-line .lab {
  padding-right: 8px;
}
.pay-line .field {
  flex: 1;
  margin-right: 16px;
}
.pay-line .down {
  width: 20px;
  height: 26px;
}
.rev {
  display: grid;
  grid-template-columns: 65fr 40px 67fr;
  gap: 1px 0;
}
.rev .lab {
  padding-right: 5px;
}
.rev-name {
  align-self: end;
  padding-left: 7px;
  line-height: 14px;
}
.move {
  width: 20px;
  height: 20px;
  margin: 13px 0 0 2px;
}
.before {
  padding: 13px 9px 19px 7px;
}
.before .rev {
  grid-template-columns: 67fr 33px 49fr;
  row-gap: 4px;
}
.before .rev-name {
  line-height: 10px;
}
.record {
  padding-left: 7px;
  text-align: center;
}
.record label {
  display: block;
  line-height: 13px;
}
.record textarea {
  display: block;
  height: 69px;
  resize: none;
}
.contact {
  display: grid;
  grid-template-columns: 42px 91fr 63px 118fr 44px 95fr 45px 130fr;
  align-items: start;
  padding-right: 1px;
  margin-top: 13px;
}
.contact .btn {
  height: 26px;
}
.contact .zip {
  width: auto;
  margin-left: 7px;
}
.contact .lab {
  padding: 10px 5px 0 0;
  align-self: start;
}
.contact .telno {
  padding-right: 13px;
}
.address {
  display: grid;
  grid-template-columns: 42px 1fr 28px;
  align-items: start;
  margin: 2px 10px 0 0;
}
.address-keys {
  display: flex;
  flex-direction: column;
}
.address-keys label {
  padding-left: 7px;
  line-height: 16px;
}
.address-lines {
  margin: 0 12px 0 7px;
}
.address-lines .field {
  display: block;
  height: 22px;
}
.address .down {
  margin-top: 4px;
}
.old {
  display: grid;
  grid-template-columns: 49px 383fr 60px 103fr;
  margin: 7px 34px 0 0;
}
.old .lab {
  padding-right: 8px;
}
.foot {
  display: flex;
  align-items: center;
  gap: 21px;
  padding: 12px 0 0 4px;
}

/* payroll column */
.payroll {
  margin-top: 30px;
  padding: 23px 12px 18px 9px;
}
.payroll legend {
  margin-left: 0;
}
.payroll > .btn {
  display: block;
  width: 98px;
  margin: 0 27px 0 auto;
}
.payroll table {
  width: 100%;
  margin-top: 30px;
  border-collapse: collapse;
}
.payroll th,
.payroll td {
  padding: 0;
  font-weight: 400;
}
.payroll thead th {
  height: 20px;
  vertical-align: top;
}
.payroll tbody td,
.payroll tfoot td {
  width: 70px;
  height: 21px;
  padding-left: 2px;
  vertical-align: top;
}
.payroll .field {
  display: block;
}
.payroll tbody th,
.payroll tfoot th {
  text-align: right;
  padding: 8px 6px 0 0;
  line-height: 13px;
}
.payroll tfoot td {
  padding-top: 21px;
}
.payroll tfoot th {
  padding-top: 27px;
}

/* arrow over the windows */
.pointer {
  position: absolute;
  left: 362px;
  top: 118px;
  overflow: visible;
  pointer-events: none;
}
</style>
